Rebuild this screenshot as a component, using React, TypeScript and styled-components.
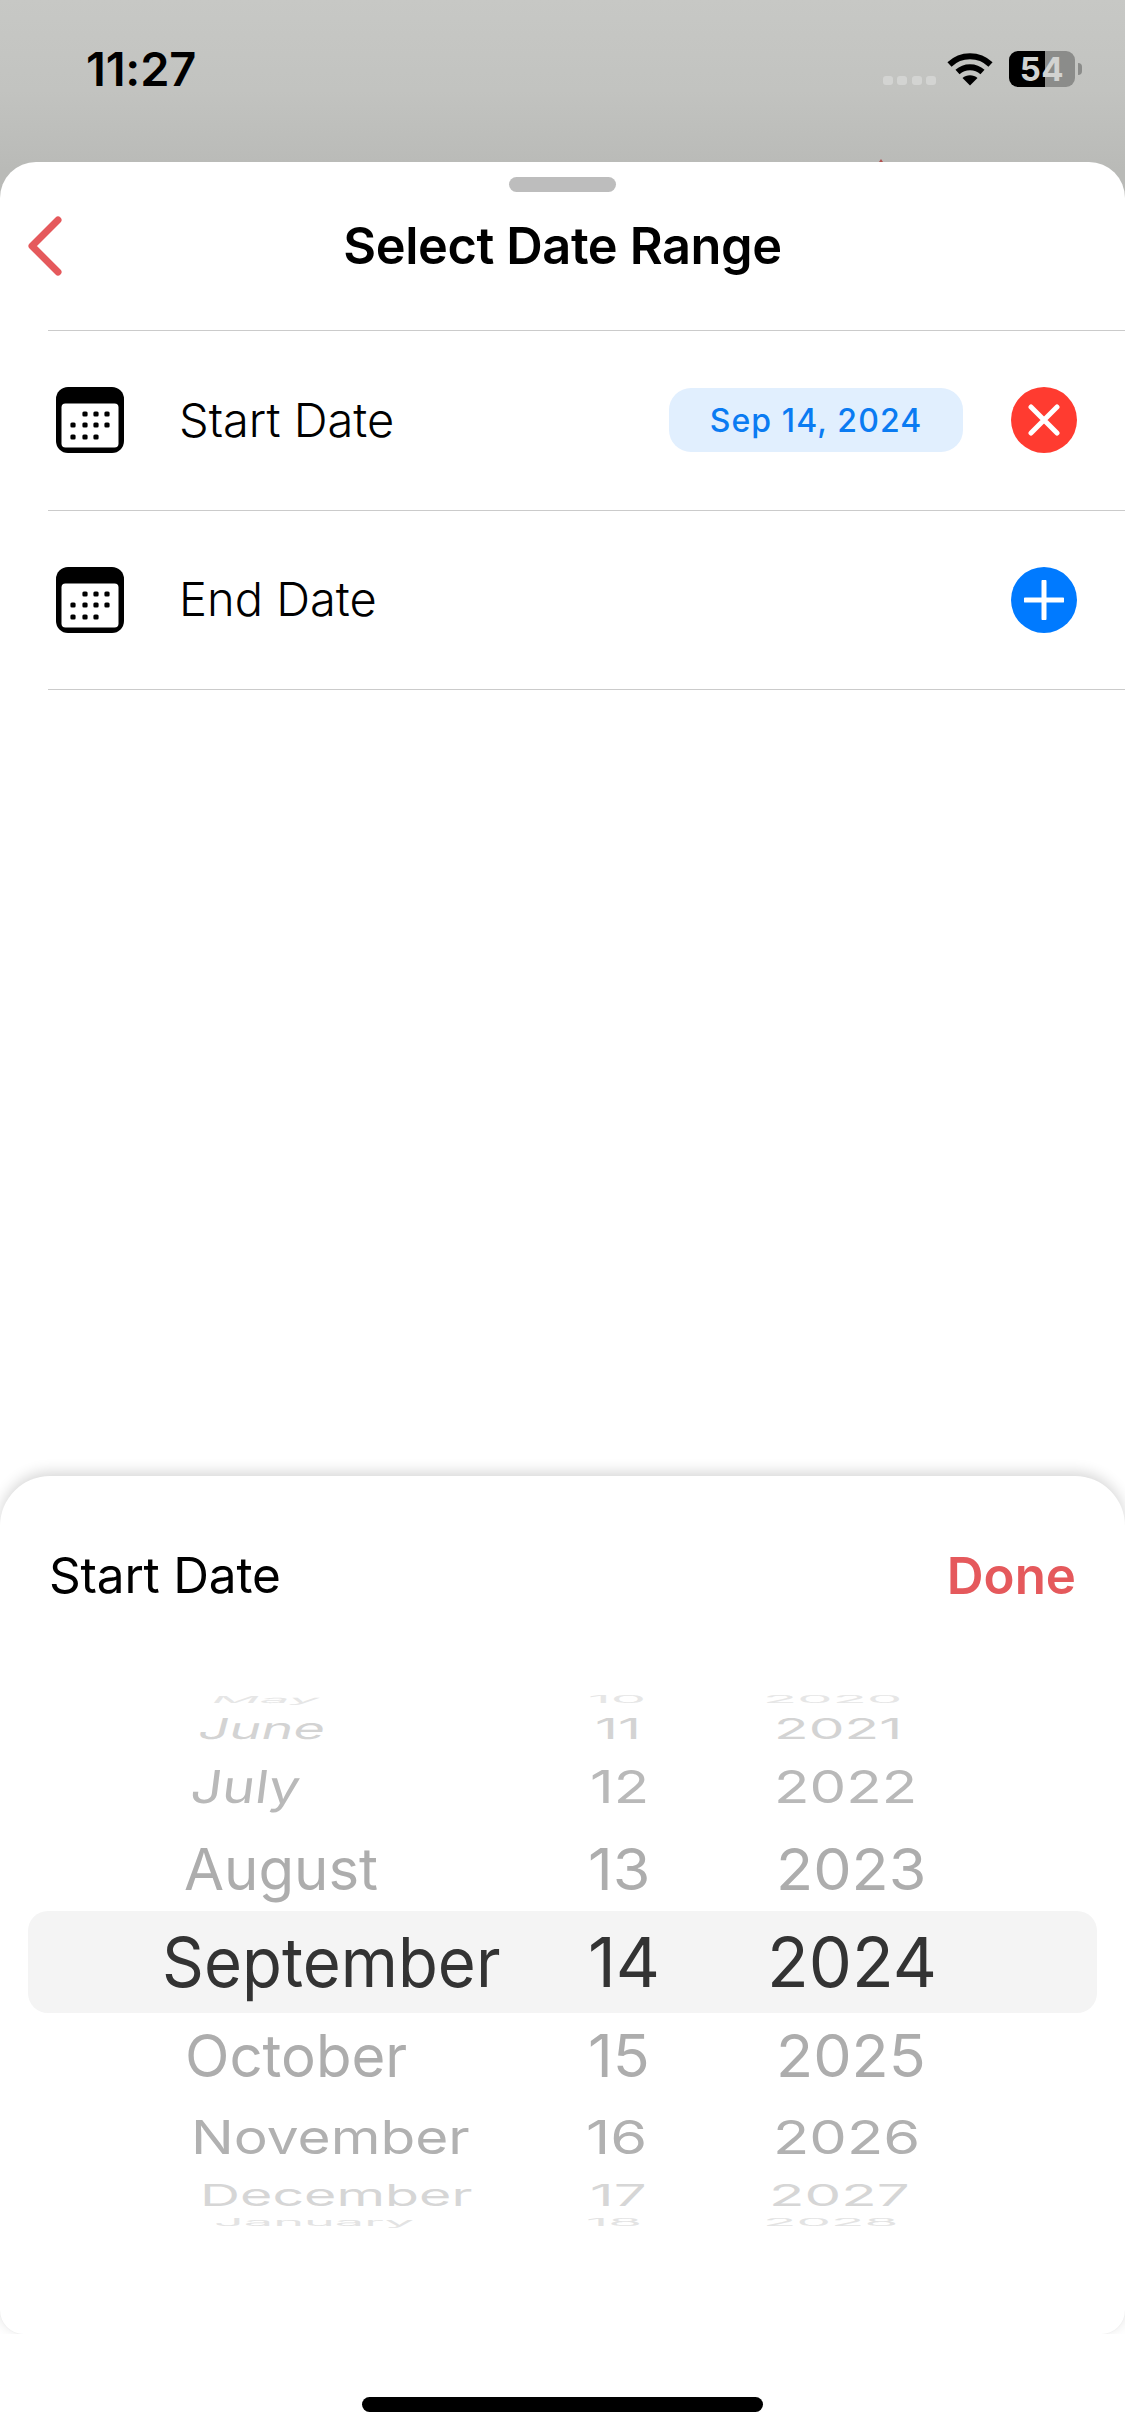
import React from "react";
import styled, { createGlobalStyle } from "styled-components";

const Global = createGlobalStyle`
  html, body { margin: 0; padding: 0; background: #fff; }
  body { font-family: Inter, "Liberation Sans", sans-serif; color: #000; }
  * { box-sizing: border-box; }
`;

const Page = styled.div`
  width: 1125px;
  height: 2436px;
  overflow: hidden;
  display: flex;
  flex-direction: column;
  background: linear-gradient(180deg, #c7c8c5 0, #c2c3c0 90px, #b9bab7 170px);
`;

const StatusBar = styled.header`
  position: relative;
  height: 162px;
  flex: none;
  padding: 51px 50px 0 86px;
  display: flex;
  justify-content: space-between;
  align-items: flex-start;
`;

const Clock = styled.span`
  font-size: 47px;
  line-height: 36px;
  font-weight: 600;
  letter-spacing: -0.2px;
`;

const StatusIcons = styled.div`
  display: flex;
  align-items: flex-start;
`;

const SignalDots = styled.div`
  display: flex;
  gap: 4.5px;
  margin: 25px 11px 0 0;
`;

const SignalDot = styled.i`
  width: 10px;
  height: 9px;
  border-radius: 3px;
  background: #d3d4d2;
`;

const WifiIcon = styled.svg`
  width: 46px;
  height: 34px;
  margin: 1px 16px 0 0;
`;

const Battery = styled.div`
  position: relative;
  width: 66px;
  height: 36px;
  border-radius: 9px;
  background: linear-gradient(90deg, #000 0, #000 36px, #8b8c8a 36px);
  color: #d2d3d1;
  font-size: 33px;
  line-height: 36px;
  font-weight: 700;
  text-align: center;
  letter-spacing: 0.5px;
  &::after {
    content: "";
    position: absolute;
    right: -7px;
    top: 12px;
    width: 4px;
    height: 12px;
    border-radius: 0 4px 4px 0;
    background: #8b8c8a;
  }
`;

const RedTick = styled.i`
  position: absolute;
  left: 879px;
  top: 159px;
  width: 4px;
  height: 3px;
  background: #b2504f;
  clip-path: polygon(50% 0, 100% 100%, 0 100%);
`;

const MainSheet = styled.main`
  flex: 1;
  display: flex;
  flex-direction: column;
  background: #fff;
  border-radius: 36px 36px 0 0;
`;

const Handle = styled.div`
  width: 107px;
  height: 15px;
  margin: 15px auto 0;
  border-radius: 8px;
  background: #bdbdbd;
`;

const NavBar = styled.nav`
  height: 138px;
  flex: none;
  padding-top: 18px;
  display: grid;
  grid-template-columns: 1fr auto 1fr;
  align-items: start;
`;

const BackIcon = styled.svg`
  width: 40px;
  height: 60px;
  margin: 6px 0 0 26px;
  display: block;
`;

const Title = styled.h1`
  margin: 8px 0 0;
  font-size: 50.5px;
  line-height: 56px;
  font-weight: 600;
  letter-spacing: -0.4px;
`;

const DateList = styled.ul`
  list-style: none;
  margin: 0 0 0 48px;
  padding: 0;
  border-top: 1.5px solid #cbcbcb;
`;

const DateRow = styled.li`
  height: 179.5px;
  padding: 0 48px 0 8px;
  display: flex;
  align-items: center;
  border-bottom: 1.5px solid #cbcbcb;
`;

const CalendarIcon = styled.svg`
  width: 68px;
  height: 66px;
  flex: none;
  display: block;
`;

const RowLabel = styled.span`
  margin: -2px 0 0 55px;
  font-size: 47px;
  font-weight: 300;
  flex: 1;
`;

const DatePill = styled.span`
  width: 294px;
  height: 64px;
  margin-right: 48px;
  border-radius: 22px;
  background: #e1effe;
  color: #0a7bf2;
  font-size: 32px;
  font-weight: 500;
  letter-spacing: 1.1px;
  display: flex;
  align-items: center;
  justify-content: center;
`;

const RoundButton = styled.button<{ $bg: string }>`
  width: 66px;
  height: 66px;
  padding: 0;
  border: 0;
  border-radius: 50%;
  background: ${(p) => p.$bg};
  display: flex;
  align-items: center;
  justify-content: center;
  svg { display: block; }
`;

const Spacer = styled.div`
  flex: 1;
`;

const PickerSheet = styled.section`
  height: 858px;
  flex: none;
  padding-top: 64px;
  border-radius: 50px 50px 24px 24px;
  background: #fff;
  box-shadow: 0 -4px 14px rgba(0, 0, 0, 0.16), 0 1px 1px rgba(0, 0, 0, 0.02);
`;

const PickerHeader = styled.div`
  padding: 0 49px;
  display: flex;
  justify-content: space-between;
  align-items: center;
  height: 70px;
`;

const PickerTitle = styled.h2`
  margin: 0;
  font-size: 49.5px;
  font-weight: 400;
  letter-spacing: -0.2px;
`;

const DoneButton = styled.button`
  padding: 0;
  border: 0;
  background: none;
  color: #e5595c;
  font: 600 51px Inter, sans-serif;
`;

const Wheel = styled.div`
  margin: 80px 28px 0;
`;

const WheelRow = styled.div<{ $h: number; $selected?: boolean }>`
  height: ${(p) => p.$h}px;
  display: grid;
  grid-template-columns: 502px 230px 1fr;
  align-items: center;
  border-radius: 20px;
  background: ${(p) => (p.$selected ? "#f4f4f4" : "transparent")};
`;

const WheelCell = styled.div<{ $left: number }>`
  padding-left: ${(p) => p.$left}px;
  height: 0;
  display: flex;
  align-items: center;
  white-space: nowrap;
`;

const WheelText = styled.span<{ $sx: number; $sy: number; $skew: number; $color: string }>`
  display: inline-block;
  font-size: 64px;
  line-height: 64px;
  font-weight: 400;
  color: ${(p) => p.$color};
  transform-origin: left center;
  transform: scale(${(p) => p.$sx}, ${(p) => p.$sy}) skewX(${(p) => p.$skew}deg);
`;

const HomeArea = styled.footer`
  height: 102px;
  flex: none;
  padding-top: 63px;
  background: #fff;
`;

const HomeBar = styled.div`
  width: 401px;
  height: 15px;
  margin: 0 auto;
  border-radius: 8px;
  background: #000;
`;

const Calendar = () => (
  <CalendarIcon viewBox="0 0 68 66">
    <rect width="68" height="66" rx="12" fill="#000" />
    <rect x="5.5" y="16.5" width="57" height="44" rx="4" fill="#fff" />
    {[
      [29, 27], [40, 27], [51, 27],
      [17, 38], [29, 38], [40, 38], [51, 38],
      [17, 50], [29, 50], [40, 50],
    ].map(([x, y]) => (
      <rect key={`${x}-${y}`} x={x - 2.6} y={y - 2.6} width="5.2" height="5.2" rx="1.5" fill="#000" />
    ))}
  </CalendarIcon>
);

type Row = {
  h: number;
  color: string;
  sx: number;
  sy: number;
  skew?: number;
  items: [string, number][];
};

const MONTH_WIDEN = 1.02;
const NUMBER_WIDEN = 1.07;

// Left edges are per-column offsets: wheel columns start at x = 28, 530, 760.
const rows: Row[] = [
  { h: 20, color: "#e6e6e6", sx: 0.82, sy: 0.15, skew: -8, items: [["May", 184], ["10", 58], ["2020", 3]] },
  { h: 38, color: "#d3d3d3", sx: 0.83, sy: 0.45, skew: -8, items: [["June", 171], ["11", 65], ["2021", 14]] },
  { h: 78, color: "#b9b9b9", sx: 0.85, sy: 0.71, skew: -6, items: [["July", 163], ["12", 60], ["2022", 14]] },
  { h: 85, color: "#adadad", sx: 0.89, sy: 0.9, items: [["August", 156], ["13", 58], ["2023", 16]] },
  { h: 102, color: "#333333", sx: 1, sy: 1.07, items: [["September", 134], ["14", 58], ["2024", 7]] },
  { h: 86, color: "#adadad", sx: 0.89, sy: 0.92, items: [["October", 157], ["15", 58], ["2025", 16]] },
  { h: 76, color: "#b1b1b1", sx: 0.87, sy: 0.73, items: [["November", 163], ["16", 56], ["2026", 13]] },
  { h: 40, color: "#d6d6d6", sx: 0.85, sy: 0.47, items: [["December", 172], ["17", 60], ["2027", 9]] },
  { h: 16, color: "#e3e3e3", sx: 0.8, sy: 0.15, items: [["January", 186], ["18", 56], ["2028", 3]] },
];

export default function App() {
  return (
    <Page>
      <Global />
      <StatusBar>
        <Clock>11:27</Clock>
        <StatusIcons>
          <SignalDots>
            <SignalDot />
            <SignalDot />
            <SignalDot />
            <SignalDot />
          </SignalDots>
          <WifiIcon viewBox="0 0 46 34">
            <g fill="none" stroke="#000" strokeWidth="6">
              <path d="M2.5 12.5 C14 1.5 32 1.5 43.5 12.5" />
              <path d="M10.5 20 C17.5 13.5 28.5 13.5 35.5 20" />
            </g>
            <path d="M23 33.5 L15.5 26 C19.5 22.3 26.5 22.3 30.5 26 Z" fill="#000" />
          </WifiIcon>
          <Battery>54</Battery>
        </StatusIcons>
        <RedTick />
      </StatusBar>
      <MainSheet>
        <Handle />
        <NavBar>
          <BackIcon viewBox="0 0 40 60">
            <path d="M32 4 L6 30 L32 56" fill="none" stroke="#e5595c" strokeWidth="7" strokeLinecap="round" strokeLinejoin="round" />
          </BackIcon>
          <Title>Select Date Range</Title>
        </NavBar>
        <DateList>
          <DateRow>
            <Calendar />
            <RowLabel>Start Date</RowLabel>
            <DatePill>Sep 14, 2024</DatePill>
            <RoundButton $bg="#ff3b30">
              <svg width="32" height="32" viewBox="0 0 32 32">
                <path d="M3 3 L29 29 M29 3 L3 29" stroke="#fff" strokeWidth="5" strokeLinecap="round" />
              </svg>
            </RoundButton>
          </DateRow>
          <DateRow>
            <Calendar />
            <RowLabel>End Date</RowLabel>
            <RoundButton $bg="#007aff">
              <svg width="40" height="40" viewBox="0 0 40 40">
                <path d="M1.5 20 H38.5 M20 1.5 V38.5" stroke="#fff" strokeWidth="5" strokeLinecap="round" />
              </svg>
            </RoundButton>
          </DateRow>
        </DateList>
        <Spacer />
        <PickerSheet>
          <PickerHeader>
            <PickerTitle>Start Date</PickerTitle>
            <DoneButton>Done</DoneButton>
          </PickerHeader>
          <Wheel>
            {rows.map((row) => (
              <WheelRow key={row.items[0][0]} $h={row.h} $selected={row.h === 102}>
                {row.items.map(([label, left], col) => (
                  <WheelCell key={label} $left={left}>
                    <WheelText
                      $sx={row.sx * (col === 0 ? MONTH_WIDEN : NUMBER_WIDEN)}
                      $sy={row.sy}
                      $skew={col === 0 ? row.skew ?? 0 : 0}
                      $color={row.color}
                    >
                      {label}
                    </WheelText>
                  </WheelCell>
                ))}
              </WheelRow>
            ))}
          </Wheel>
        </PickerSheet>
        <HomeArea>
          <HomeBar />
        </HomeArea>
      </MainSheet>
    </Page>
  );
}
